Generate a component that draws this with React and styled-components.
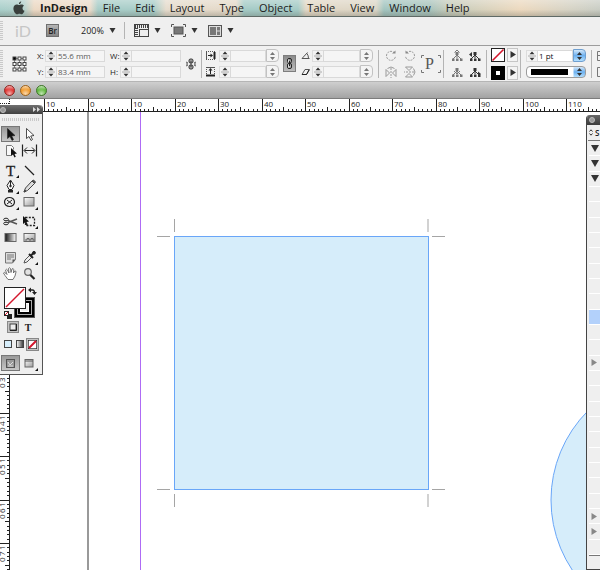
// App.jsx
import React, { useEffect, useState } from 'react';
import styled, { createGlobalStyle } from 'styled-components';

const GlobalStyle = createGlobalStyle`
  * {
    box-sizing: border-box;
  }

  body {
    margin: 0;
    background: #fff;
    font-family: 'Open Sans', 'Noto Sans', sans-serif;
    color: #222;
  }

  button, input, select {
    font-family: inherit;
    color: inherit;
    margin: 0;
    padding: 0;
  }

  svg {
    display: block;
    flex: none;
  }
`;

const Screen = styled.div`
  display: flex;
  flex-direction: column;
  min-height: 100vh;
  overflow: hidden;
`;

/* ---------- menu bar ---------- */

const MenuBar = styled.nav`
  display: flex;
  align-items: center;
  gap: 15px;
  height: 17px;
  padding-left: 13px;
  border-bottom: 1px solid #5f6a66;
  background:
    linear-gradient(rgba(255, 255, 255, 0.3), rgba(255, 255, 255, 0) 60%, rgba(70, 70, 60, 0.25)),
    linear-gradient(90deg, #a9cfca 0, #b3d0cb 24px, #ecd9c4 34px, #ecdccb 90px, #a8cdc8 98px,
      #a8cdc8 154px, #e6dccd 166px, #e4d9c8 236px, #a5cbc6 244px, #a5cbc6 298px, #e3d8c6 306px,
      #dcd6c6 376px, #a3c5c0 384px, #a9c4bd 430px, #c4cbbb 446px, #ecd9bf 520px, #d6d3c5 570px,
      #c9cdc4 100%);
`;

const MenuLink = styled.a`
  font-size: 11px;
  line-height: 16px;
  color: #1b1b1b;
  text-decoration: none;
  white-space: nowrap;
  font-weight: ${(props) => (props.$bold ? 700 : 500)};
`;

/* ---------- application bar ---------- */

const AppBar = styled.header`
  display: grid;
  grid-template-columns: 15px 31px 35px 43px 10px 37px 37px 1fr;
  align-items: center;
  height: 29px;
  padding-bottom: 1px;
  background: #efefef;
  border-bottom: 1px solid #9d9d9d;
`;

const Grip = styled.div`
  width: 3px;
  height: ${(props) => props.$height}px;
  background: repeating-linear-gradient(#c9c9c9 0 1px, #efefef 1px 2px);
`;

const Logo = styled.span`
  font-family: Lato, sans-serif;
  font-size: 16px;
  line-height: 18px;
  color: #c6c6c6;
`;

const BridgeButton = styled.button`
  width: 13px;
  height: 13px;
  border: 1px solid #6f6f6f;
  background: linear-gradient(#b5b5b5, #858585);
  font-size: 8px;
  font-weight: 600;
  line-height: 10px;
`;

const ZoomLabel = styled.label`
  display: flex;
  align-items: center;
  gap: 4px;
`;

const ZoomSelect = styled.select`
  appearance: none;
  width: 24px;
  border: 0;
  background: none;
  font-size: 9px;
  line-height: 12px;
`;

const DropButton = styled.button`
  display: flex;
  align-items: center;
  gap: 5px;
  border: 0;
  background: none;
`;

const Divider = styled.div`
  width: 1px;
  height: ${(props) => props.$height}px;
  background: #b4b4b4;
`;

/* ---------- control panel ---------- */

const ControlPanel = styled.section`
  display: grid;
  grid-template-columns:
    12px 25px 73px 76px 15px 4px 78px 18px 77px 7px 36px 22px 8px 35px 5px 29px 6px 65px 6px 1fr;
  align-items: center;
  justify-items: start;
  height: 36px;
  background: #f1f1f1;
  border-bottom: 1px solid #b5b5b5;
  overflow: hidden;
`;

const Stack = styled.div`
  display: flex;
  flex-direction: column;
  gap: 4px;
`;

const FieldRow = styled.div`
  display: flex;
  align-items: center;
  height: 12px;
`;

const FieldLabel = styled.label`
  display: flex;
  width: ${(props) => props.$width}px;
  font-size: 8px;
  line-height: 12px;
`;

const StepButton = styled.button`
  display: flex;
  align-items: center;
  justify-content: center;
  width: 11px;
  height: 12px;
  border: 1px solid #dcdcdc;
  border-right: 0;
  background: #f3f3f3;
`;

const FieldInput = styled.input`
  width: ${(props) => props.$width}px;
  height: 12px;
  padding-left: 1px;
  border: 1px solid #d9d9d9;
  background: ${(props) => props.$background || '#f5f5f5'};
  color: ${(props) => props.$color || '#5a5a5a'};
  font-size: 8px;
  line-height: 10px;
`;

const PopupButton = styled.button`
  display: flex;
  align-items: center;
  justify-content: center;
  width: 13px;
  height: 13px;
  border: 1px solid ${(props) => (props.$blue ? '#6f9fd0' : '#c2c2c2')};
  border-radius: 0 4px 4px 0;
  background: ${(props) =>
    props.$blue ? 'linear-gradient(#d3e8fb, #6db0ee 50%, #b4e0ff)' : '#f4f4f4'};
`;

const ChainButton = styled.button`
  display: flex;
  align-items: center;
  justify-content: center;
  width: 13px;
  height: 17px;
  border: 1px solid #7d7d7d;
  background: linear-gradient(#8b8b8b, #bcbcbc);
`;

const IconGrid = styled.div`
  display: grid;
  grid-template-columns: repeat(2, 12px);
  column-gap: ${(props) => props.$gap}px;
  row-gap: 4px;
`;

const IconButton = styled.button`
  display: flex;
  border: 0;
  background: none;
`;

const SwatchRow = styled.div`
  display: flex;
  gap: 2px;
`;

const ArrowButton = styled.button`
  display: flex;
  align-items: center;
  justify-content: center;
  width: 11px;
  height: 14px;
  border: 1px solid #c6c6c6;
  background: #f4f4f4;
`;

const StrokeStyle = styled.button`
  display: flex;
  align-items: center;
  width: 60px;
  height: 12px;
  padding: 0 3px 0 4px;
  border: 1px solid #9c9c9c;
  border-radius: 4px;
  background: linear-gradient(90deg, #fff 46px, transparent 47px),
    linear-gradient(#d3e8fb, #6db0ee 50%, #b4e0ff);
`;

const StrokeLine = styled.span`
  flex: 1;
  height: 6px;
  margin-right: 9px;
  background: #000;
`;

/* ---------- document window ---------- */

const DocumentWindow = styled.main`
  position: relative;
  flex: 1;
  display: flex;
  flex-direction: column;
`;

const TitleBar = styled.div`
  display: flex;
  align-items: center;
  gap: 5px;
  height: 17px;
  padding-left: 4px;
  background: linear-gradient(#cfcfcf, #a3a3a3);
  border-bottom: 1px solid #7c7c7c;
`;

const WindowButton = styled.button`
  width: 11px;
  height: 11px;
  border: 1px solid ${(props) => props.$edge};
  border-radius: 50%;
  background: radial-gradient(circle at 50% 85%, #fff9 0, transparent 55%),
    linear-gradient(#fff9, transparent 45%), ${(props) => props.$color};
`;

const HorizontalRuler = styled.svg`
  width: 100%;
  height: 13px;
  border-bottom: 1px solid #222;
`;

const DocumentBody = styled.div`
  flex: 1;
  display: grid;
  grid-template-columns: 10px 1fr;
`;

const VerticalRuler = styled.svg`
  width: 10px;
  height: 100%;
  border-right: 1px solid #222;
`;

const Artboard = styled.svg`
  width: 100%;
  height: 100%;
`;

const RulerText = styled.text`
  font-size: 8px;
  fill: #222;
`;

/* ---------- floating tool palette ---------- */

const ToolPalette = styled.aside`
  position: absolute;
  left: 0;
  top: 23px;
  width: 43px;
  border-right: 1px solid #555;
  border-bottom: 1px solid #555;
  border-radius: 0 4px 0 0;
  background: #efefef;
`;

const PaletteHeader = styled.div`
  display: flex;
  align-items: center;
  justify-content: space-between;
  height: 9px;
  padding-right: 2px;
  border-radius: 0 4px 0 0;
  background: linear-gradient(#717171, #3f3f3f);
`;

const CloseDot = styled.button`
  width: 6px;
  height: 6px;
  border: 1px solid #bbb;
  border-radius: 50%;
  background: #999;
`;

const PaletteGrip = styled.div`
  height: 3px;
  margin: 4px 2px 5px;
  background: repeating-linear-gradient(90deg, #c9c9c9 0 1px, #efefef 1px 2px);
`;

const ToolGroup = styled.div`
  display: grid;
  grid-template-columns: 18px 18px;
  column-gap: 1px;
  padding-left: 1px;
  margin-bottom: ${(props) => props.$after || 0}px;
`;

const ToolButton = styled.button`
  display: flex;
  align-items: center;
  justify-content: center;
  width: 19px;
  height: 16px;
  border: ${(props) => (props.$active ? '1px solid #777' : '0')};
  background: ${(props) => (props.$active ? 'linear-gradient(#999, #c6c6c6)' : 'none')};
`;

const ColorArea = styled.div`
  height: 34px;
  padding-left: 3px;
`;

const ModeRow = styled.div`
  display: flex;
  align-items: center;
  gap: ${(props) => props.$gap}px;
  height: ${(props) => props.$height}px;
  padding-left: ${(props) => props.$left}px;
`;

const ModeButton = styled.button`
  display: flex;
  align-items: center;
  justify-content: center;
  width: ${(props) => props.$size}px;
  height: ${(props) => props.$size}px;
  border: ${(props) => (props.$active ? '1px solid #888' : '0')};
  background: ${(props) => (props.$active ? '#c4c4c4' : 'none')};
  font-family: 'Liberation Serif', serif;
  font-size: 10px;
  font-weight: 700;
`;

/* ---------- docked panel on the right ---------- */

const SidePanel = styled.aside`
  position: absolute;
  right: 0;
  top: 33px;
  bottom: 0;
  width: 14px;
  display: flex;
  flex-direction: column;
  border-left: 1px solid #444;
  border-bottom: 1px solid #444;
  border-radius: 4px 0 0 0;
  background: #efefef;
  overflow: hidden;
`;

const SideHeader = styled.div`
  display: flex;
  align-items: center;
  flex: none;
  height: 10px;
  padding-left: 2px;
  background: linear-gradient(#666, #3c3c3c);
`;

const SideTab = styled.div`
  display: flex;
  align-items: center;
  gap: 2px;
  flex: none;
  height: 16px;
  padding-left: 1px;
  margin-left: 1px;
  border-bottom: 1px solid #777;
  font-size: 8px;
  line-height: 12px;
  font-weight: 600;
`;

const SideRow = styled.div`
  flex: 1;
  display: flex;
  align-items: center;
  margin-left: 2px;
  padding-left: 2px;
  border-bottom: 1px solid #fff;
  background: ${(props) => (props.$selected ? '#b3d1fb' : 'transparent')};
`;

const SideFooter = styled.div`
  flex: none;
  height: 14px;
  margin-left: 2px;
  border-top: 1px solid #777;
`;

/* ---------- small drawings ---------- */

const DownArrow = () => (
  <svg width="7" height="5" viewBox="0 0 7 5">
    <path d="M0.5 0h6l-3 5z" fill="#333" />
  </svg>
);

const UpDown = ({ color = '#333' }) => (
  <svg width="5" height="8" viewBox="0 0 5 8">
    <path d="M0 3L2.5 0 5 3zM0 5h5L2.5 8z" fill={color} />
  </svg>
);

const RightArrow = ({ color = '#333' }) => (
  <svg width="6" height="7" viewBox="0 0 6 7">
    <path d="M0.5 0L6 3.5 0.5 7z" fill={color} />
  </svg>
);

const Stepper = ({ label }) => (
  <StepButton aria-label={label}>
    <svg width="8" height="10" viewBox="0 0 8 10">
      <path d="M1.5 3.2L4 0.5l2.500 2.700zM1.500 6.800h5L4 9.500z" fill="#333" />
      <path d="M0 5h8" stroke="#aaa" />
    </svg>
  </StepButton>
);

const Apple = () => (
  <svg width="12" height="14" viewBox="0 0 12 14">
    <path
      d="M8.2 0.3c0.1 1.6-1 2.8-2.3 2.9C5.8 1.8 6.9 0.6 8.2 0.3zM6.1 4c0.7 0 1.2-0.6 2.4-0.6 1 0 1.9 0.5 2.5 1.3-2.2 1.3-1.8 4.3 0.5 5.1C11 11.4 9.8 13.3 8.6 13.3c-0.9 0-1.2-0.5-2.2-0.5S5 13.3 4.2 13.3C2.5 13.3 0.4 10.2 0.4 7.500c0-2.700 1.700-4.100 3.400-4.100C4.800 3.400 5.500 4 6.100 4z"
      fill="#393f3c"
    />
  </svg>
);

const Chain = ({ color = '#222' }) => (
  <svg width="7" height="11" viewBox="0 0 7 11" fill="none" stroke={color}>
    <rect x="1.5" y=".5" width="4" height="4.5" rx="1.5" />
    <rect x="1.5" y="5.5" width="4" height="5" rx="1.5" />
    <path d="M3.5 3v5" />
    <path d="M2.500 1.500v3M2.500 6.500v3" stroke="#ddd" />
  </svg>
);

const BrokenChain = () => (
  <svg width="10" height="12" viewBox="0 0 10 12" fill="none" stroke="#333">
    <rect x="3" y="1" width="4" height="4" rx="1.5" fill="#999" />
    <rect x="3" y="7" width="4" height="4" rx="1.5" fill="#999" />
    <path d="M5 3v6M0 4l2 1M0 8l2-1M10 4L8 5M10 8L8 7M0 6h2M8 6h2" strokeWidth=".8" />
  </svg>
);

const ReferencePoints = () => (
  <svg width="15" height="16" viewBox="0 0 15 16" fill="none" stroke="#444">
    <path d="M2.5 2.5h10M2.5 8h10M2.5 13.5h10M2.5 2.5v11M7.5 2.5v11M12.5 2.5v11" stroke="#888" />
    {[2.5, 8, 13.5].map((y) =>
      [2.5, 7.5, 12.5].map((x) => (
        <rect
          key={`${x}-${y}`}
          x={x - 1.5}
          y={y - 1.5}
          width="3"
          height="3"
          fill={x === 2.5 && y === 2.5 ? '#000' : '#fff'}
        />
      ))
    )}
  </svg>
);

const ScaleX = () => (
  <svg width="11" height="11" viewBox="0 0 11 11" fill="none" stroke="#555">
    <path d="M1 1.5h9M1 9.5h9" strokeDasharray="1 1" />
    <path d="M1.5 1v9" />
    <path d="M9.500 2v7" strokeWidth="2" stroke="#222" />
    <path d="M3 5.5h3" stroke="#222" />
    <path d="M5.500 3.500v4l2.500-2z" fill="#222" stroke="none" />
  </svg>
);

const ScaleY = () => (
  <svg width="11" height="11" viewBox="0 0 11 11" fill="none" stroke="#555">
    <path d="M1.5 1v7M9.5 1v7" strokeDasharray="1 1" />
    <path d="M2 1.5h7" />
    <path d="M1 9.500h9" strokeWidth="2" stroke="#222" />
    <path d="M5.5 4v4" stroke="#222" />
    <path d="M3.500 4.500h4l-2-2.500z" fill="#222" stroke="none" />
  </svg>
);

const Angle = () => (
  <svg width="9" height="9" viewBox="0 0 9 9" fill="none" stroke="#555">
    <path d="M6.500 1.500L1 7.500h7.500" />
    <path d="M6 2.500q1.500 2 1.500 5" />
  </svg>
);

const Shear = () => (
  <svg width="9" height="9" viewBox="0 0 9 9" fill="none" stroke="#555">
    <path d="M1 7.5L4 2.5h4.5L5.5 7.5z" />
    <path d="M1 7.5h4.5L8 3" stroke="#222" />
  </svg>
);

const Rotate = ({ flip }) => (
  <svg width="12" height="12" viewBox="0 0 12 12" fill="none" stroke="#999">
    <g transform={flip ? 'translate(12 0) scale(-1 1)' : undefined}>
      <path d="M9.5 3A4.5 4.5 0 1 0 10.5 6" strokeDasharray="2 1" />
      <path d="M7 3.5h3.5V0.5z" fill="#888" stroke="none" />
    </g>
  </svg>
);

const Flip = ({ vertical }) => (
  <svg width="12" height="12" viewBox="0 0 12 12" fill="none" stroke="#999">
    <g transform={vertical ? 'rotate(90 6 6)' : undefined}>
      <path d="M1 3.5v7L4.5 7zM11 3.5v7L7.5 7z" />
      <path d="M6 2v10" strokeDasharray="2 1" />
      <path d="M2.5 2.5q3.5-3 7 0" />
    </g>
  </svg>
);

const Container = () => (
  <svg width="20" height="20" viewBox="0 0 20 20" fill="none" stroke="#777">
    <path d="M0.5 4V1.5H3M17 1.5h2.5V4M0.5 16v2.5H3M17 18.5h2.5V16" />
    <text x="4" y="15" fill="#555" stroke="none" fontFamily="Liberation Serif, serif" fontSize="16">
      P
    </text>
  </svg>
);

const Hierarchy = ({ color = '#777', arrow }) => (
  <svg width="12" height="12" viewBox="0 0 12 12" fill="none" stroke={color}>
    <path d="M6 3v5M2 9l4-4 4 4" />
    <path d="M4.5 2h3v3h-3zM1 8.5h2.500V11H1zM5 8.5h2.500V11H5zM9 8.5h2.500V11H9z" fill={color} stroke="none" />
    {arrow === 'up' && <path d="M3.5 2.5L6 0l2.5 2.5" />}
    {arrow === 'down' && <path d="M3 5l3 3 3-3" />}
    {arrow === 'left' && <path d="M0 4.5L3 2v5z" fill={color} stroke="none" />}
    {arrow === 'right' && <path d="M12 8L9 5.5v5z" fill={color} stroke="none" />}
  </svg>
);

const NoneSwatch = ({ size = 14 }) => (
  <svg width={size} height={size} viewBox="0 0 14 14">
    <rect x=".5" y=".5" width="13" height="13" fill="#fff" stroke="#222" />
    <path d="M1.5 12.5l11-11" stroke="#d4162c" strokeWidth={size < 14 ? 3 : 1.6} />
  </svg>
);

const StrokeSwatch = () => (
  <svg width="14" height="14" viewBox="0 0 14 14">
    <path d="M0 0h14v14H0z" />
    <path d="M5 5h4v4H5z" fill="#fff" />
  </svg>
);

const ToolIcon = ({ children, flyout }) => (
  <svg width="17" height="15" viewBox="0 0 17 15" fill="none" stroke="#222">
    {children}
    {flyout && <path d="M17 12v3h-3z" fill="#111" stroke="none" />}
  </svg>
);

const arrowPath = 'M5.5 1.500v10l2.500-2 2 4 1.500-1-1.800-3.500 3.300-.5z';

const toolGroups = [
  {
    after: 4,
    tools: [
      { name: 'Selection', active: true, icon: <path d={arrowPath} fill="#111" strokeWidth=".6" /> },
      { name: 'Direct Selection', icon: <path d={arrowPath} fill="#fff" strokeWidth=".8" /> },
      {
        name: 'Page',
        icon: (
          <>
            <path d="M9 12.5H4.5v-10h5l2 2v2" stroke="#777" fill="#f8f8f8" />
            <path d="M9 5v8l2-1.5 1.5 3 1.3-.8-1.3-2.7 2.5-.4z" fill="#111" stroke="none" />
          </>
        ),
      },
      {
        name: 'Gap',
        icon: (
          <>
            <path d="M1.5 1.5v12M15.5 1.5v12M3.5 7.5h10" strokeWidth="1.2" />
            <path d="M6 4.5l-3 3 3 3M11 4.5l3 3-3 3" />
          </>
        ),
      },
    ],
  },
  {
    after: 3,
    tools: [
      {
        name: 'Type',
        flyout: true,
        icon: (
          <text x="4" y="13" fill="#222" stroke="#222" strokeWidth=".3" fontFamily="Liberation Serif, serif" fontSize="15">
            T
          </text>
        ),
      },
      { name: 'Line', icon: <path d="M4 3l9 9" strokeWidth="1.3" /> },
      {
        name: 'Pen',
        flyout: true,
        icon: (
          <>
            <path d="M8.5 1L5 6.5l2 4h3l2-4zM8.5 2v5" fill="#f8f8f8" />
            <path d="M6 11h5v2.5H6z" fill="#222" stroke="none" />
            <circle cx="8.5" cy="7" r=".8" fill="#222" />
          </>
        ),
      },
      {
        name: 'Pencil',
        flyout: true,
        icon: (
          <>
            <path d="M3 13l1.5-4L11 2l2.5 2.5-7 7z" fill="#ddd" stroke="#444" />
            <path d="M3 13l.8-2 1.200 1.200zM11 2l1.500-1 2 2-1 1.500z" fill="#555" stroke="#444" />
          </>
        ),
      },
      {
        name: 'Ellipse Frame',
        flyout: true,
        icon: (
          <>
            <ellipse cx="7.5" cy="7" rx="5" ry="4.5" strokeWidth="1.2" />
            <path d="M5 5l5 4M10 5l-5 4" />
          </>
        ),
      },
      {
        name: 'Rectangle',
        flyout: true,
        icon: <rect x="3" y="2.5" width="10" height="8.5" fill="url(#silver)" stroke="#666" />,
      },
    ],
  },
  {
    after: 4,
    tools: [
      {
        name: 'Scissors',
        icon: (
          <>
            <path d="M15 5L6 8.5M15 10L6 6.500" stroke="#555" strokeWidth="1.5" />
            <ellipse cx="4" cy="5.500" rx="2.3" ry="1.3" />
            <ellipse cx="4" cy="9.5" rx="2.3" ry="1.3" />
          </>
        ),
      },
      {
        name: 'Free Transform',
        flyout: true,
        icon: (
          <>
            <rect x="4.5" y="3.5" width="9" height="8" strokeDasharray="2 1.3" strokeWidth="1.3" />
            <path d="M2 2v8l2-1.600 1.500 3 1.300-.8-1.300-2.700 2.500-.4z" fill="#111" stroke="none" />
          </>
        ),
      },
      {
        name: 'Gradient Swatch',
        icon: <rect x="3" y="3.5" width="11" height="8" fill="url(#fade)" stroke="#666" />,
      },
      {
        name: 'Gradient Feather',
        icon: (
          <>
            <rect x="3" y="3.5" width="11" height="8" fill="url(#silver)" stroke="#666" />
            <path d="M4 10h2V8.500h2V10h2V8.500h2V10h1.500" stroke="#666" />
          </>
        ),
      },
    ],
  },
  {
    after: 6,
    tools: [
      {
        name: 'Note',
        icon: (
          <>
            <path d="M3.5 2.5h10v7l-3 3.5h-7z" fill="#ddd" stroke="#777" />
            <path d="M5 5h7M5 7h7M5 9h4" stroke="#777" />
            <path d="M10.5 13V9.5h3z" fill="#555" stroke="none" />
          </>
        ),
      },
      {
        name: 'Eyedropper',
        flyout: true,
        icon: (
          <>
            <path d="M3 13l1-3 5-5 2 2-5 5z" fill="#eee" stroke="#555" />
            <path d="M8 4l4 4M10 5.5l3-3" strokeWidth="2" />
            <circle cx="13" cy="2.8" r="1.4" fill="#222" />
          </>
        ),
      },
      {
        name: 'Hand',
        icon: (
          <path
            d="M6 13.5L3 9.5 1.5 7q1-1.5 2.5.5L5 8.5 3.5 4q.8-1.5 2 0L7 7 6.5 2.500q1-1.500 2 0L9 6.500l1-3.500q1.300-1.200 1.700.5L11.500 7l1.200-2q1.300-.5 1.300 1L13 10l-2 3.500z"
            fill="#fff"
            stroke="#555"
            strokeWidth=".8"
          />
        ),
      },
      {
        name: 'Zoom',
        icon: (
          <>
            <path d="M9 8.5l4.5 4.5" strokeWidth="2.2" />
            <circle cx="7" cy="6" r="3.3" fill="#e2e2e2" stroke="#666" strokeWidth="1.2" />
          </>
        ),
      },
    ],
  },
];

const menus = ['File', 'Edit', 'Layout', 'Type', 'Object', 'Table', 'View', 'Window', 'Help'];

// 10 mm on the rulers
const STEP = 43.5;

const useWindowSize = () => {
  const [size, setSize] = useState({ width: window.innerWidth, height: window.innerHeight });

  useEffect(() => {
    const onResize = () => setSize({ width: window.innerWidth, height: window.innerHeight });
    window.addEventListener('resize', onResize);
    return () => window.removeEventListener('resize', onResize);
  }, []);

  return size;
};

const Field = ({ id, label, labelWidth, value = '', inputWidth, popup, title }) => (
  <FieldRow>
    <FieldLabel htmlFor={id} $width={labelWidth}>
      {label}
    </FieldLabel>
    <Stepper label={`${title} stepper`} />
    <FieldInput id={id} aria-label={title} $width={inputWidth} defaultValue={value} />
    {popup && (
      <PopupButton aria-label={`${title} presets`}>
        <UpDown color="#777" />
      </PopupButton>
    )}
  </FieldRow>
);

const TopRuler = () => {
  const { width } = useWindowSize();
  const ticks = [];
  const labels = [];

  for (let mm = -18; 88 + (mm * STEP) / 10 < width; mm++) {
    const x = Math.floor(88 + (mm * STEP) / 10);
    const height = mm % 10 === 0 ? 13 : mm % 5 === 0 ? 4 : 2;
    ticks.push(<path key={mm} d={`M${x + 0.5} 12v-${height}`} stroke="#222" />);
    if (mm % 10 === 0 && mm >= -10 && x + 18 < width) {
      labels.push(
        <RulerText key={mm} x={x + 2} y="8">
          {Math.abs(mm)}
        </RulerText>
      );
    }
  }

  return (
    <HorizontalRuler>
      {ticks}
      {labels}
      <path d="M0 4.5h9M9.5 0v13" stroke="#222" strokeDasharray="1 1" />
    </HorizontalRuler>
  );
};

const LeftRuler = () => {
  const { height } = useWindowSize();
  const bottom = height - 112;
  const ticks = [];
  const labels = [];

  for (let mm = 71; 301 + ((mm - 140) * STEP) / 10 < bottom; mm++) {
    const y = Math.floor(301 + ((mm - 140) * STEP) / 10);
    const width = mm % 10 === 0 ? 10 : mm % 5 === 0 ? 4 : 2;
    ticks.push(<path key={mm} d={`M9 ${y + 0.5}h-${width}`} stroke="#222" />);
    if (mm % 10 === 0 && y + 20 < bottom) {
      String(mm)
        .split('')
        .forEach((digit, i) => {
          labels.push(
            <RulerText key={`${mm}-${i}`} transform={`translate(5 ${y + 7 + i * 6}) rotate(-90)`}>
              {digit}
            </RulerText>
          );
        });
    }
  }

  return (
    <VerticalRuler>
      {ticks}
      {labels}
    </VerticalRuler>
  );
};

const Drawing = () => (
  <Artboard>
    <path d="M78 0v2000" stroke="#777" strokeWidth="1.5" />
    <path d="M130.5 0v2000" stroke="#ae6bf5" />
    <path
      d="M164.5 107v13M418 107v13M164.5 382v13M418 382v13M147 124.5h13M422 124.5h13M147 377.5h13M422 377.5h13"
      stroke="#a5a5a5"
    />
    <rect x="164.5" y="124.5" width="254" height="253" fill="#d6edfa" stroke="#69a6f8" />
    <circle cx="667" cy="388" r="126" fill="#d6edfa" stroke="#69a6f8" />
  </Artboard>
);

const Tools = () => (
  <ToolPalette aria-label="Tools">
    <svg width="0" height="0">
      <defs>
        <linearGradient id="silver" x2="1" y2="1">
          <stop offset="0" stopColor="#fff" />
          <stop offset="1" stopColor="#999" />
        </linearGradient>
        <linearGradient id="fade">
          <stop offset="0" stopColor="#111" />
          <stop offset="1" stopColor="#fff" />
        </linearGradient>
        <linearGradient id="fadeBack">
          <stop offset="0" stopColor="#fff" />
          <stop offset="1" stopColor="#333" />
        </linearGradient>
      </defs>
    </svg>
    <PaletteHeader>
      <CloseDot aria-label="Close tools" />
      <svg width="7" height="5" viewBox="0 0 7 5" fill="#ddd">
        <path d="M0 0l3 2.5L0 5zM4 0l3 2.5L4 5z" />
      </svg>
    </PaletteHeader>
    <PaletteGrip />
    {toolGroups.map((group) => (
      <ToolGroup key={group.tools[0].name} $after={group.after}>
        {group.tools.map((tool) => (
          <ToolButton key={tool.name} aria-label={tool.name} $active={tool.active}>
            <ToolIcon flyout={tool.flyout}>{tool.icon}</ToolIcon>
          </ToolButton>
        ))}
      </ToolGroup>
    ))}
    <ColorArea>
      <svg width="36" height="34" viewBox="0 0 36 34">
        <rect x="11.5" y="10.5" width="20" height="20" stroke="#555" />
        <rect x="14.5" y="13.5" width="14" height="14" fill="none" stroke="#aaa" />
        <rect x="17.5" y="16.5" width="8" height="8" fill="#efefef" stroke="#fff" />
        <rect x="1.5" y=".5" width="21" height="21" fill="#fff" stroke="#222" />
        <path d="M3 20L21 2" stroke="#d4162c" strokeWidth="1.5" />
        <path d="M27 3h2.5q2 0 2 3" fill="none" stroke="#222" strokeWidth="1.3" />
        <path d="M25 3l3-2.5v5zM31.5 8l-2.5-3h5z" fill="#222" />
        <path d="M4 27h5v5H4z" fill="#222" />
        <rect x="1.5" y="24.5" width="4" height="4" fill="#fff" stroke="#222" />
        <path d="M2 28l3-3" stroke="#d4162c" />
      </svg>
    </ColorArea>
    <ModeRow $left={7} $gap={3} $height={12}>
      <ModeButton $size={12} $active aria-label="Formatting affects container">
        <svg width="8" height="8" viewBox="0 0 8 8">
          <rect x="1" y="1" width="6" height="6" fill="#eee" stroke="#444" />
          <path d="M1 7.500h6.500V1" fill="none" stroke="#222" />
        </svg>
      </ModeButton>
      <ModeButton $size={12} aria-label="Formatting affects text">
        T
      </ModeButton>
    </ModeRow>
    <ModeRow $left={2} $gap={0} $height={22}>
      <ModeButton $size={12} aria-label="Apply color">
        <svg width="8" height="8" viewBox="0 0 8 8">
          <rect x=".5" y=".5" width="7" height="7" fill="#d6edfa" stroke="#444" />
        </svg>
      </ModeButton>
      <ModeButton $size={12} aria-label="Apply gradient">
        <svg width="8" height="8" viewBox="0 0 8 8">
          <rect x=".5" y=".5" width="7" height="7" fill="url(#fadeBack)" stroke="#444" />
        </svg>
      </ModeButton>
      <ModeButton $size={13} $active aria-label="Apply none">
        <NoneSwatch size={9} />
      </ModeButton>
    </ModeRow>
    <ToolGroup $after={3}>
      <ToolButton $active aria-label="Normal view">
        <svg width="9" height="9" viewBox="0 0 9 9" fill="none" stroke="#555">
          <rect x=".5" y=".5" width="8" height="8" fill="#999" />
          <path d="M2 3l2 3 3-3M2 7h5" stroke="#ddd" />
        </svg>
      </ToolButton>
      <ToolButton aria-label="Screen mode">
        <ToolIcon flyout>
          <rect x="4" y="3.5" width="8" height="7.5" fill="url(#silver)" stroke="#666" />
          <path d="M4 5h8" stroke="#555" />
        </ToolIcon>
      </ToolButton>
    </ToolGroup>
  </ToolPalette>
);

const Styles = () => (
  <SidePanel aria-label="Styles">
    <SideHeader>
      <CloseDot aria-label="Close panel" />
    </SideHeader>
    <SideTab>
      <svg width="4" height="7" viewBox="0 0 4 7" fill="none" stroke="#333">
        <path d="M.5 2.500L2 .8l1.500 1.700M.5 4.500L2 6.200l1.500-1.700" />
      </svg>
      S
    </SideTab>
    {Array.from({ length: 27 }, (_, i) => (
      <SideRow key={i} $selected={i === 11}>
        {i < 3 && (
          <svg width="8" height="7" viewBox="0 0 8 7">
            <path d="M0 0h8L4 7z" fill="#333" />
          </svg>
        )}
        {[14, 24, 25].includes(i) && <RightArrow color="#888" />}
      </SideRow>
    ))}
    <SideFooter />
  </SidePanel>
);

const App = () => {
  return (
    <Screen>
      <GlobalStyle />
      <MenuBar>
        <Apple />
        <MenuLink href="#indesign" $bold>
          InDesign
        </MenuLink>
        {menus.map((menu) => (
          <MenuLink key={menu} href={`#${menu.toLowerCase()}`}>
            {menu}
          </MenuLink>
        ))}
      </MenuBar>

      <AppBar>
        <Grip $height={20} />
        <Logo>iD</Logo>
        <BridgeButton>Br</BridgeButton>
        <ZoomLabel>
          <ZoomSelect aria-label="Zoom level" defaultValue="200%">
            <option>200%</option>
          </ZoomSelect>
          <DownArrow />
        </ZoomLabel>
        <Divider $height={17} />
        <DropButton aria-label="View options">
          <svg width="15" height="13" viewBox="0 0 15 13" fill="none" stroke="#444">
            <rect x=".5" y=".5" width="14" height="12" fill="#eee" />
            <path d="M1 2.5h13" strokeWidth="3" strokeDasharray="1 1" />
            <path d="M2.5 4v9" strokeWidth="3" strokeDasharray="1 1" />
            <path d="M5 5.5h9M5.5 5v7" />
          </svg>
          <DownArrow />
        </DropButton>
        <DropButton aria-label="Screen mode">
          <svg width="15" height="13" viewBox="0 0 15 13" fill="none" stroke="#555">
            <path d="M.5 3V.5H3M12 .5h2.5V3M.5 10v2.5H3M12 12.5h2.5V10" />
            <rect x="3" y="3" width="9" height="7" fill="#777" />
          </svg>
          <DownArrow />
        </DropButton>
        <DropButton aria-label="Arrange documents">
          <svg width="14" height="12" viewBox="0 0 14 12">
            <rect x=".5" y=".5" width="13" height="11" fill="#ddd" stroke="#555" />
            <path d="M2 2h6v8H2zM9 2h3v3.5H9zM9 6.5h3V10H9z" fill="#777" />
          </svg>
          <DownArrow />
        </DropButton>
      </AppBar>

      <ControlPanel>
        <Grip $height={28} />
        <ReferencePoints />
        <Stack>
          <Field id="x" label="X:" title="X position" labelWidth={8} inputWidth={49} value="55.6 mm" />
          <Field id="y" label="Y:" title="Y position" labelWidth={8} inputWidth={49} value="83.4 mm" />
        </Stack>
        <Stack>
          <Field id="w" label="W:" title="Width" labelWidth={10} inputWidth={50} />
          <Field id="h" label="H:" title="Height" labelWidth={10} inputWidth={50} />
        </Stack>
        <IconButton aria-label="Constrain proportions">
          <BrokenChain />
        </IconButton>
        <Divider $height={28} />
        <Stack>
          <Field id="sx" label={<ScaleX />} title="Scale X" labelWidth={14} inputWidth={36} popup />
          <Field id="sy" label={<ScaleY />} title="Scale Y" labelWidth={14} inputWidth={36} popup />
        </Stack>
        <ChainButton aria-label="Constrain scaling">
          <Chain />
        </ChainButton>
        <Stack>
          <Field id="rot" label={<Angle />} title="Rotation" labelWidth={11} inputWidth={37} popup />
          <Field id="shear" label={<Shear />} title="Shear" labelWidth={11} inputWidth={37} popup />
        </Stack>
        <Divider $height={28} />
        <IconGrid $gap={7}>
          <IconButton aria-label="Rotate clockwise">
            <Rotate />
          </IconButton>
          <IconButton aria-label="Rotate counter-clockwise">
            <Rotate flip />
          </IconButton>
          <IconButton aria-label="Flip horizontal">
            <Flip />
          </IconButton>
          <IconButton aria-label="Flip vertical">
            <Flip vertical />
          </IconButton>
        </IconGrid>
        <Container />
        <Divider $height={28} />
        <IconGrid $gap={6}>
          <IconButton aria-label="Select container">
            <Hierarchy arrow="up" />
          </IconButton>
          <IconButton aria-label="Select previous object">
            <Hierarchy color="#333" arrow="left" />
          </IconButton>
          <IconButton aria-label="Select content">
            <Hierarchy arrow="down" />
          </IconButton>
          <IconButton aria-label="Select next object">
            <Hierarchy color="#333" arrow="right" />
          </IconButton>
        </IconGrid>
        <Divider $height={28} />
        <Stack>
          <SwatchRow>
            <IconButton aria-label="Fill">
              <NoneSwatch />
            </IconButton>
            <ArrowButton aria-label="Fill swatches">
              <RightArrow />
            </ArrowButton>
          </SwatchRow>
          <SwatchRow>
            <IconButton aria-label="Stroke">
              <StrokeSwatch />
            </IconButton>
            <ArrowButton aria-label="Stroke swatches">
              <RightArrow />
            </ArrowButton>
          </SwatchRow>
        </Stack>
        <Divider $height={28} />
        <Stack>
          <FieldRow>
            <Stepper label="Stroke weight stepper" />
            <FieldInput
              aria-label="Stroke weight"
              defaultValue="1 pt"
              $width={36}
              $background="#fff"
              $color="#111"
            />
            <PopupButton $blue aria-label="Stroke weight presets">
              <UpDown />
            </PopupButton>
          </FieldRow>
          <StrokeStyle aria-label="Stroke style">
            <StrokeLine />
            <UpDown />
          </StrokeStyle>
        </Stack>
        <Divider $height={28} />
        <Stack>
          <svg width="11" height="12" viewBox="0 0 11 12" fill="none" stroke="#777">
            <path d="M11 1.5H.5v9H11M.5 5.5H11" />
          </svg>
          <svg width="11" height="12" viewBox="0 0 11 12" fill="none" stroke="#777">
            <path d="M11 1.5H.5v9H11M4 5.5h7" />
          </svg>
        </Stack>
      </ControlPanel>

      <DocumentWindow>
        <TitleBar>
          <WindowButton $color="#e0322f" $edge="#8d2b26" aria-label="Close" />
          <WindowButton $color="#f09a2c" $edge="#9a6424" aria-label="Minimize" />
          <WindowButton $color="#5fb83c" $edge="#42752f" aria-label="Zoom window" />
        </TitleBar>
        <TopRuler />
        <DocumentBody>
          <LeftRuler />
          <Drawing />
        </DocumentBody>
        <Tools />
        <Styles />
      </DocumentWindow>
    </Screen>
  );
};

export default App;
